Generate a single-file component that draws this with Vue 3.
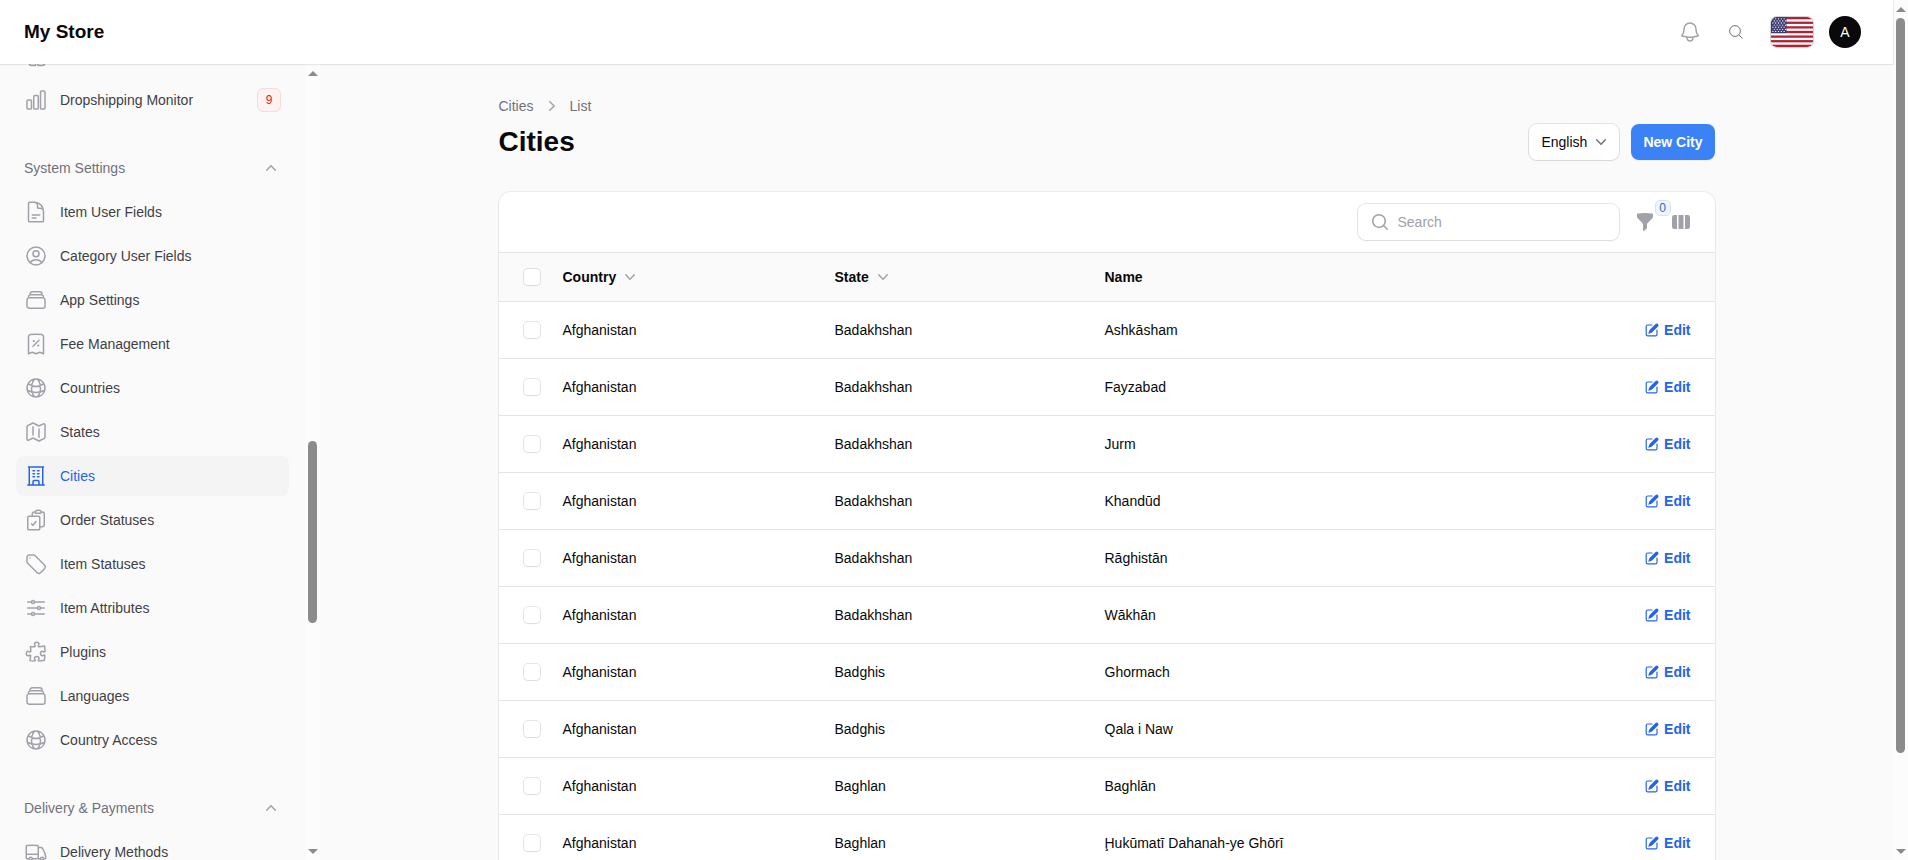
<script setup>
import { ref } from 'vue'

const paths = {
  squares: 'M5.5 17.5v2.25c0 1 .75 1.75 1.75 1.75h4.25v-4M14 17.5v4h4.25c1 0 2.25-.75 2.25-1.75V17.5',
  chart: 'M3 13.125C3 12.504 3.504 12 4.125 12h2.25c.621 0 1.125.504 1.125 1.125v6.75C7.5 20.496 6.996 21 6.375 21h-2.25A1.125 1.125 0 0 1 3 19.875v-6.75ZM9.75 8.625c0-.621.504-1.125 1.125-1.125h2.25c.621 0 1.125.504 1.125 1.125v11.25c0 .621-.504 1.125-1.125 1.125h-2.25a1.125 1.125 0 0 1-1.125-1.125V8.625ZM16.5 4.125c0-.621.504-1.125 1.125-1.125h2.25C20.496 3 21 3.504 21 4.125v15.75c0 .621-.504 1.125-1.125 1.125h-2.25a1.125 1.125 0 0 1-1.125-1.125V4.125Z',
  document: 'M19.5 14.25v-2.625a3.375 3.375 0 0 0-3.375-3.375h-1.5A1.125 1.125 0 0 1 13.5 7.125v-1.5a3.375 3.375 0 0 0-3.375-3.375H8.25m0 12.75h7.5m-7.5 3H12M10.5 2.25H5.625c-.621 0-1.125.504-1.125 1.125v17.25c0 .621.504 1.125 1.125 1.125h12.75c.621 0 1.125-.504 1.125-1.125V11.25a9 9 0 0 0-9-9Z',
  user: 'M17.982 18.725A7.488 7.488 0 0 0 12 15.75a7.488 7.488 0 0 0-5.982 2.975m11.963 0a9 9 0 1 0-11.963 0m11.963 0A8.966 8.966 0 0 1 12 21a8.966 8.966 0 0 1-5.982-2.275M15 9.75a3 3 0 1 1-6 0 3 3 0 0 1 6 0Z',
  stack: 'M6 6.878V6a2.25 2.25 0 0 1 2.25-2.25h7.5A2.25 2.25 0 0 1 18 6v.878m-12 0c.235-.083.487-.128.75-.128h10.5c.263 0 .515.045.75.128m-12 0A2.25 2.25 0 0 0 4.5 9v.878m13.5-3A2.25 2.25 0 0 1 19.5 9v.878m0 0a2.246 2.246 0 0 0-.75-.128H5.25c-.263 0-.515.045-.75.128m15 0A2.25 2.25 0 0 1 21 12v6a2.25 2.25 0 0 1-2.25 2.25H5.25A2.25 2.25 0 0 1 3 18v-6c0-.98.626-1.813 1.5-2.122',
  receipt: 'm9 14.25 6-6m4.5-3.493V21.75l-3.75-1.5-3.75 1.5-3.75-1.5-3.75 1.5V4.757c0-1.108.806-2.057 1.907-2.185a48.507 48.507 0 0 1 11.186 0c1.1.128 1.907 1.077 1.907 2.185ZM9.75 9h.008v.008H9.75V9Zm.375 0a.375.375 0 1 1-.75 0 .375.375 0 0 1 .75 0Zm4.125 4.5h.008v.008h-.008V13.5Zm.375 0a.375.375 0 1 1-.75 0 .375.375 0 0 1 .75 0Z',
  globe: 'M12 21a9.004 9.004 0 0 0 8.716-6.747M12 21a9.004 9.004 0 0 1-8.716-6.747M12 21c2.485 0 4.5-4.03 4.5-9S14.485 3 12 3m0 18c-2.485 0-4.5-4.03-4.5-9S9.515 3 12 3m0 0a8.997 8.997 0 0 1 7.843 4.582M12 3a8.997 8.997 0 0 0-7.843 4.582m15.686 0A11.953 11.953 0 0 1 12 10.5c-2.998 0-5.74-1.1-7.843-2.918m15.686 0A8.959 8.959 0 0 1 21 12c0 .778-.099 1.533-.284 2.253m0 0A17.919 17.919 0 0 1 12 16.5c-3.162 0-6.133-.815-8.716-2.247m0 0A9.015 9.015 0 0 1 3 12c0-1.605.42-3.113 1.157-4.418',
  map: 'M9 6.75V15m6-6v8.25m.503 3.498 4.875-2.437c.381-.19.622-.58.622-1.006V4.82c0-.836-.88-1.38-1.628-1.006l-3.869 1.934c-.317.159-.69.159-1.006 0L9.503 3.252a1.125 1.125 0 0 0-1.006 0L3.622 5.689C3.24 5.88 3 6.27 3 6.695V19.18c0 .836.88 1.38 1.628 1.006l3.869-1.934c.317-.159.69-.159 1.006 0l4.994 2.497c.317.158.69.158 1.006 0Z',
  building: 'M3.75 21h16.5M4.5 3h15M5.25 3v18m13.5-18v18M9 6.75h1.5m-1.5 3h1.5m-1.5 3h1.5m3-6H15m-1.5 3H15m-1.5 3H15M9 21v-3.375c0-.621.504-1.125 1.125-1.125h3.75c.621 0 1.125.504 1.125 1.125V21',
  clipboard: 'M11.35 3.836c-.065.21-.1.433-.1.664 0 .414.336.75.75.75h4.5a.75.75 0 0 0 .75-.75 2.25 2.25 0 0 0-.1-.664m-5.8 0A2.251 2.251 0 0 1 13.5 2.25H15c1.012 0 1.867.668 2.15 1.586m-5.8 0c-.376.023-.75.05-1.124.08C9.095 4.01 8.25 4.973 8.25 6.108V8.25m8.9-4.414c.376.023.75.05 1.124.08 1.131.094 1.976 1.057 1.976 2.192V16.5A2.25 2.25 0 0 1 18 18.75h-2.25m-7.5-10.5H4.875c-.621 0-1.125.504-1.125 1.125v11.25c0 .621.504 1.125 1.125 1.125h9.75c.621 0 1.125-.504 1.125-1.125V18.75m-7.5-10.5h6.375c.621 0 1.125.504 1.125 1.125v9.375m-8.25-3 1.5 1.5 3-3.75',
  tag: 'M9.568 3H5.25A2.25 2.25 0 0 0 3 5.25v4.318c0 .597.237 1.17.659 1.591l9.581 9.581c.699.699 1.78.872 2.607.33a18.095 18.095 0 0 0 5.223-5.223c.542-.827.369-1.908-.33-2.607L11.16 3.66A2.25 2.25 0 0 0 9.568 3ZM6 6h.008v.008H6V6Z',
  sliders: 'M10.5 6h9.75M10.5 6a1.5 1.5 0 1 1-3 0m3 0a1.5 1.5 0 1 0-3 0M3.75 6H7.5m3 12h9.75m-9.75 0a1.5 1.5 0 0 1-3 0m3 0a1.5 1.5 0 0 0-3 0m-3.75 0H7.5m9-6h3.75m-3.75 0a1.5 1.5 0 0 1-3 0m3 0a1.5 1.5 0 0 0-3 0m-9.75 0h9.75',
  puzzle: 'M14.25 6.087c0-.355.186-.676.401-.959.221-.29.349-.634.349-1.003 0-1.036-1.007-1.875-2.25-1.875s-2.25.84-2.25 1.875c0 .369.128.713.349 1.003.215.283.401.604.401.959v0a.64.64 0 0 1-.657.643 48.39 48.39 0 0 1-4.163-.3c.186 1.613.293 3.25.315 4.907a.656.656 0 0 1-.658.663v0c-.355 0-.676-.186-.959-.401a1.647 1.647 0 0 0-1.003-.349c-1.036 0-1.875 1.007-1.875 2.25s.84 2.25 1.875 2.25c.369 0 .713-.128 1.003-.349.283-.215.604-.401.959-.401v0c.31 0 .555.26.532.57a48.039 48.039 0 0 1-.642 5.056c1.518.19 3.058.309 4.616.354a.64.64 0 0 0 .657-.643v0c0-.355-.186-.676-.401-.959a1.647 1.647 0 0 1-.349-1.003c0-1.035 1.008-1.875 2.25-1.875 1.243 0 2.25.84 2.25 1.875 0 .369-.128.713-.349 1.003-.215.283-.4.604-.4.959v0c0 .333.277.599.61.58a48.1 48.1 0 0 0 5.427-.63 48.05 48.05 0 0 0 .582-4.717.532.532 0 0 0-.533-.57v0c-.355 0-.676.186-.959.401-.29.221-.634.349-1.003.349-1.035 0-1.875-1.007-1.875-2.25s.84-2.25 1.875-2.25c.37 0 .713.128 1.003.349.283.215.604.401.96.401v0a.656.656 0 0 0 .658-.663 48.422 48.422 0 0 0-.37-5.36c-1.886.342-3.81.574-5.766.689a.578.578 0 0 1-.61-.58v0Z',
  truck: 'M8.25 18.75a1.5 1.5 0 0 1-3 0m3 0a1.5 1.5 0 0 0-3 0m3 0h6m-9 0H3.375a1.125 1.125 0 0 1-1.125-1.125V14.25m17.25 4.5a1.5 1.5 0 0 1-3 0m3 0a1.5 1.5 0 0 0-3 0m3 0h1.125c.621 0 1.129-.504 1.09-1.124a17.902 17.902 0 0 0-3.213-9.193 2.056 2.056 0 0 0-1.58-.86H14.25M16.5 18.75h-2.25m0-11.177v-.958c0-.568-.422-1.048-.987-1.106a48.554 48.554 0 0 0-10.026 0 1.106 1.106 0 0 0-.987 1.106v7.635m12-6.677v6.677m0 4.5v-4.5m0 0h-12',
  bell: 'M14.857 17.082a23.848 23.848 0 0 0 5.454-1.31A8.967 8.967 0 0 1 18 9.75V9A6 6 0 0 0 6 9v.75a8.967 8.967 0 0 1-2.312 6.022c1.733.64 3.56 1.085 5.455 1.31m5.714 0a24.255 24.255 0 0 1-5.714 0m5.714 0a3 3 0 1 1-5.714 0',
}

const solid = {
  up: 'M14.77 12.79a.75.75 0 0 1-1.06-.02L10 8.832 6.29 12.77a.75.75 0 1 1-1.08-1.04l4.25-4.5a.75.75 0 0 1 1.08 0l4.25 4.5a.75.75 0 0 1-.02 1.06Z',
  down: 'M5.23 7.21a.75.75 0 0 1 1.06.02L10 11.168l3.71-3.938a.75.75 0 1 1 1.08 1.04l-4.25 4.5a.75.75 0 0 1-1.08 0l-4.25-4.5a.75.75 0 0 1 .02-1.06Z',
  right: 'M7.21 14.77a.75.75 0 0 1 .02-1.06L11.168 10 7.23 6.29a.75.75 0 1 1 1.04-1.08l4.5 4.25a.75.75 0 0 1 0 1.08l-4.5 4.25a.75.75 0 0 1-1.06-.02Z',
  search: 'M9 3.5a5.5 5.5 0 1 0 0 11 5.5 5.5 0 0 0 0-11ZM2 9a7 7 0 1 1 12.452 4.391l3.328 3.329a.75.75 0 1 1-1.06 1.06l-3.329-3.328A7 7 0 0 1 2 9Z',
  funnel: 'M2.628 1.601C5.028 1.206 7.49 1 10 1s4.973.206 7.372.601a.75.75 0 0 1 .628.74v2.288a2.25 2.25 0 0 1-.659 1.59l-4.682 4.683a2.25 2.25 0 0 0-.659 1.59v3.037c0 .684-.31 1.33-.844 1.757l-1.937 1.55A.75.75 0 0 1 8 18.25v-5.757a2.25 2.25 0 0 0-.659-1.591L2.659 6.22A2.25 2.25 0 0 1 2 4.629V2.34a.75.75 0 0 1 .628-.74Z',
  columns: 'M14 17h2.75A2.25 2.25 0 0 0 19 14.75v-9.5A2.25 2.25 0 0 0 16.75 3H14v14ZM12.5 3h-5v14h5V3ZM3.25 3H6v14H3.25A2.25 2.25 0 0 1 1 14.75v-9.5A2.25 2.25 0 0 1 3.25 3Z',
  pencil: 'm5.433 13.917 1.262-3.155A4 4 0 0 1 7.58 9.42l6.92-6.918a2.121 2.121 0 0 1 3 3l-6.92 6.918c-.383.383-.84.685-1.343.886l-3.154 1.262a.5.5 0 0 1-.65-.65ZM3.5 5.75c0-.69.56-1.25 1.25-1.25H10A.75.75 0 0 0 10 3H4.75A2.75 2.75 0 0 0 2 5.75v9.5A2.75 2.75 0 0 0 4.75 18h9.5A2.75 2.75 0 0 0 17 15.25V10a.75.75 0 0 0-1.5 0v5.25c0 .69-.56 1.25-1.25 1.25h-9.5c-.69 0-1.25-.56-1.25-1.25v-9.5Z',
}

const groups = [
  {
    items: [
      { label: '', icon: 'squares' },
      { label: 'Dropshipping Monitor', icon: 'chart', badge: 9 },
    ],
  },
  {
    title: 'System Settings',
    items: [
      { label: 'Item User Fields', icon: 'document' },
      { label: 'Category User Fields', icon: 'user' },
      { label: 'App Settings', icon: 'stack' },
      { label: 'Fee Management', icon: 'receipt' },
      { label: 'Countries', icon: 'globe' },
      { label: 'States', icon: 'map' },
      { label: 'Cities', icon: 'building', active: true },
      { label: 'Order Statuses', icon: 'clipboard' },
      { label: 'Item Statuses', icon: 'tag' },
      { label: 'Item Attributes', icon: 'sliders' },
      { label: 'Plugins', icon: 'puzzle' },
      { label: 'Languages', icon: 'stack' },
      { label: 'Country Access', icon: 'globe' },
    ],
  },
  {
    title: 'Delivery & Payments',
    items: [{ label: 'Delivery Methods', icon: 'truck' }],
  },
]

const cities = [
  ['Badakhshan', 'Ashkāsham'],
  ['Badakhshan', 'Fayzabad'],
  ['Badakhshan', 'Jurm'],
  ['Badakhshan', 'Khandūd'],
  ['Badakhshan', 'Rāghistān'],
  ['Badakhshan', 'Wākhān'],
  ['Badghis', 'Ghormach'],
  ['Badghis', 'Qala i Naw'],
  ['Baghlan', 'Baghlān'],
  ['Baghlan', 'Ḩukūmatī Dahanah-ye Ghōrī'],
].map(([state, name]) => ({ country: 'Afghanistan', state, name }))

const query = ref('')
const language = ref('English')
</script>

<template>
  <div class="page">
    <div class="shell">
      <header class="topbar">
        <a class="brand" href="#">My Store</a>
        <div class="tools">
          <button class="tool" type="button" aria-label="Notifications">
            <svg class="line i24" viewBox="0 0 24 24"><path :d="paths.bell" /></svg>
          </button>
          <button class="tool" type="button" aria-label="Search">
            <svg class="thin" viewBox="0 0 14 14"><circle cx="6" cy="6" r="5.4" /><path d="M9.8 9.8l3.8 3.8" /></svg>
          </button>
          <button class="flag" type="button" aria-label="Change language">
            <svg viewBox="0 0 42 30" preserveAspectRatio="none">
              <rect width="42" height="30" fill="#fff" />
              <rect v-for="n in 7" :key="n" width="42" :y="(n - 1) * 4.615" height="2.308" fill="#b22234" />
              <rect width="15.5" height="16.15" fill="#3c3b6e" />
              <template v-for="r in 7" :key="r">
                <circle v-for="c in 5" :key="c" :cx="(r % 2 ? 0 : 1.4) + c * 2.8 - 0.9" :cy="r * 2.1 - 0.3" r=".65" fill="#fff" />
              </template>
            </svg>
          </button>
          <button class="avatar" type="button" aria-label="Account">A</button>
        </div>
      </header>

      <div class="body">
        <aside class="sidebar">
          <nav class="nav" aria-label="Main">
            <section v-for="(g, gi) in groups" :key="gi" class="group">
              <button v-if="g.title" class="group-title" type="button" aria-expanded="true">
                <span>{{ g.title }}</span>
                <svg class="fill i20" viewBox="0 0 20 20"><path :d="solid.up" /></svg>
              </button>
              <a v-for="(item, ii) in g.items" :key="ii" href="#" class="item" :class="{ active: item.active }">
                <svg class="line i24" viewBox="0 0 24 24"><path :d="paths[item.icon]" /></svg>
                <span class="item-label">{{ item.label }}</span>
                <span v-if="item.badge" class="badge">{{ item.badge }}</span>
              </a>
            </section>
          </nav>
          <div class="scrollbar" aria-hidden="true">
            <i class="arrow up"></i>
            <div class="track side-track"><b class="thumb"></b></div>
            <i class="arrow down"></i>
          </div>
        </aside>

        <main class="main">
          <div class="content">
            <div class="heading">
              <div>
                <nav class="crumbs" aria-label="Breadcrumb">
                  <a href="#">Cities</a>
                  <svg class="fill i20" viewBox="0 0 20 20"><path :d="solid.right" /></svg>
                  <a href="#">List</a>
                </nav>
                <h1>Cities</h1>
              </div>
              <div class="actions">
                <div class="lang">
                  <select v-model="language" aria-label="Language">
                    <option>English</option>
                  </select>
                  <svg class="fill i20" viewBox="0 0 20 20"><path :d="solid.down" /></svg>
                </div>
                <button class="primary" type="button">New City</button>
              </div>
            </div>

            <section class="card">
              <div class="toolbar">
                <label class="search">
                  <svg class="fill i20" viewBox="0 0 20 20"><path :d="solid.search" /></svg>
                  <input v-model="query" type="search" placeholder="Search" aria-label="Search" />
                </label>
                <button class="icon-btn" type="button" aria-label="Filter">
                  <svg class="fill i20" viewBox="0 0 20 20"><path :d="solid.funnel" /></svg>
                  <span class="count">0</span>
                </button>
                <button class="icon-btn" type="button" aria-label="Toggle columns">
                  <svg class="fill i20" viewBox="0 0 20 20"><path :d="solid.columns" /></svg>
                </button>
              </div>
              <table>
                <colgroup>
                  <col class="c-check" />
                  <col class="c-country" />
                  <col class="c-state" />
                  <col />
                  <col class="c-edit" />
                </colgroup>
                <thead>
                  <tr>
                    <th class="check"><input type="checkbox" aria-label="Select all" /></th>
                    <th>
                      <button class="sort" type="button">Country<svg class="fill i20" viewBox="0 0 20 20"><path :d="solid.down" /></svg></button>
                    </th>
                    <th>
                      <button class="sort" type="button">State<svg class="fill i20" viewBox="0 0 20 20"><path :d="solid.down" /></svg></button>
                    </th>
                    <th>Name</th>
                    <th></th>
                  </tr>
                </thead>
                <tbody>
                  <tr v-for="c in cities" :key="c.name">
                    <td class="check"><input type="checkbox" :aria-label="'Select ' + c.name" /></td>
                    <td>{{ c.country }}</td>
                    <td>{{ c.state }}</td>
                    <td>{{ c.name }}</td>
                    <td class="edit-cell">
                      <a class="edit" href="#"><svg class="i16" viewBox="0 0 20 20"><path :d="solid.pencil" /></svg>Edit</a>
                    </td>
                  </tr>
                </tbody>
              </table>
            </section>
          </div>
        </main>
      </div>
    </div>
    <div class="scrollbar" aria-hidden="true">
      <i class="arrow up"></i>
      <div class="track page-track"><b class="thumb"></b></div>
      <i class="arrow down"></i>
    </div>
  </div>
</template>

<style>
body { margin: 0; background: #fafafa; }
</style>

<style scoped>
* { box-sizing: border-box; }
.page { display: flex; height: 100vh; overflow: hidden; font-family: "Liberation Sans", Arial, sans-serif; font-size: 14px; line-height: 20px; color: #09090b; background: #fafafa; }
a { color: inherit; text-decoration: none; }
button { font: inherit; color: inherit; background: none; border: 0; padding: 0; cursor: pointer; }
svg { display: block; flex: none; }
.i16 { width: 16px; height: 16px; fill: currentColor; }
.i20 { width: 20px; height: 20px; }
.i24 { width: 24px; height: 24px; }
.fill { fill: #a1a1aa; }
.line { fill: none; stroke: #a1a1aa; stroke-width: 1.5; stroke-linecap: round; stroke-linejoin: round; }
.thin { width: 14px; height: 14px; fill: none; stroke: #71717a; stroke-width: 1; }

.shell { flex: 1; min-width: 0; display: flex; flex-direction: column; }
.topbar { flex: none; height: 64px; padding: 0 32px 0 24px; display: flex; align-items: center; justify-content: space-between; background: #fff; box-shadow: 0 0 0 1px rgba(9, 9, 11, .05), 0 1px 2px rgba(0, 0, 0, .05); z-index: 1; }
.brand { font-size: 19px; line-height: 28px; font-weight: 700; }
.tools { display: flex; align-items: center; }
.tool { width: 46px; height: 36px; display: flex; align-items: center; justify-content: center; }
.flag { width: 42px; height: 30px; margin: 0 16px 0 12px; border-radius: 6px; overflow: hidden; box-shadow: 0 0 0 1px #d4d4d8; }
.flag svg { width: 100%; height: 100%; }
.avatar { width: 32px; height: 32px; border-radius: 50%; background: #09090b; color: #fff; text-align: center; }

.body { flex: 1; min-height: 0; display: flex; }
.sidebar { flex: none; width: 320px; display: flex; overflow: hidden; }
.nav { flex: 1; margin-top: -28px; padding: 0 16px; display: flex; flex-direction: column; gap: 28px; }
.group { display: flex; flex-direction: column; gap: 4px; }
.group-title { display: flex; align-items: center; justify-content: space-between; height: 40px; padding: 0 8px; color: #71717a; }
.item { display: flex; align-items: center; gap: 12px; height: 40px; padding: 0 8px; border-radius: 8px; color: #3f3f46; }
.item-label { flex: 1; }
.item.active { background: #f4f4f5; color: #2563eb; }
.item.active .line { stroke: #2563eb; }
.badge { width: 24px; height: 24px; line-height: 22px; text-align: center; font-size: 12px; border: 1px solid #fbdada; border-radius: 6px; background: #fef2f2; color: #dc2626; }

.scrollbar { flex: none; width: 15px; display: flex; flex-direction: column; align-items: center; background: #fcfcfc; }
.arrow { height: 18px; display: flex; align-items: center; }
.arrow::before { content: ""; border: 5px solid transparent; }
.arrow.up::before { border-top: 0; border-bottom-color: #8b8b8b; }
.arrow.down::before { border-bottom: 0; border-top-color: #8b8b8b; }
.track { flex: 1; display: flex; flex-direction: column; }
.track::before, .track::after { content: ""; }
.thumb { width: 9px; border-radius: 5px; background: #8b8b8b; }
.side-track::before { flex: 359; }
.side-track .thumb { flex: 182; }
.side-track::after { flex: 219; }
.page-track .thumb { flex: 735; }
.page-track::after { flex: 89; }

.main { flex: 1; min-width: 0; overflow: hidden; }
.content { max-width: 1280px; margin: 0 auto; padding: 32px; }
.heading { display: flex; align-items: flex-end; justify-content: space-between; margin-bottom: 32px; }
.crumbs { display: flex; align-items: center; gap: 8px; margin-bottom: 8px; color: #71717a; }
h1 { margin: 0; font-size: 28px; line-height: 36px; font-weight: 700; }
.actions { display: flex; align-items: center; gap: 12px; }
.lang { position: relative; width: 90px; border-radius: 8px; background: #fff; box-shadow: 0 0 0 1px rgba(9, 9, 11, .1), 0 1px 2px rgba(0, 0, 0, .05); }
.lang select { appearance: none; width: 100%; height: 36px; padding: 0 32px 0 12px; border: 0; border-radius: 8px; background: none; font: inherit; color: inherit; }
.lang svg { position: absolute; right: 8px; top: 8px; fill: #6b7280; pointer-events: none; }
.primary { height: 36px; padding: 0 12px; border-radius: 8px; background: #3b82f6; color: #fff; font-weight: 700; box-shadow: 0 1px 2px rgba(0, 0, 0, .05); }

.card { border-radius: 12px; background: #fff; box-shadow: 0 0 0 1px rgba(9, 9, 11, .06), 0 1px 2px rgba(0, 0, 0, .05); overflow: hidden; }
.toolbar { display: flex; align-items: center; justify-content: flex-end; gap: 16px; padding: 12px 24px; }
.search { display: flex; align-items: center; gap: 8px; width: 261px; height: 36px; padding: 0 12px; border-radius: 8px; box-shadow: 0 0 0 1px rgba(9, 9, 11, .1), 0 1px 2px rgba(0, 0, 0, .05); }
.search input { flex: 1; min-width: 0; padding: 0; border: 0; outline: 0; background: none; font: inherit; color: inherit; }
.search input::placeholder { color: #a1a1aa; opacity: 1; }
.icon-btn { position: relative; }
.count { position: absolute; left: 20px; top: -12px; width: 16px; height: 16px; line-height: 14px; text-align: center; font-size: 12px; border: 1px solid #d3e3fd; border-radius: 5px; background: #eff6ff; color: #2563eb; }

table { width: 100%; table-layout: fixed; border-collapse: separate; border-spacing: 0; }
.c-check { width: 52px; }
.c-country { width: 272px; }
.c-state { width: 270px; }
.c-edit { width: 120px; }
th, td { padding: 0 12px; text-align: left; vertical-align: middle; border-top: 1px solid #e4e4e7; }
th { height: 49px; background: #fafafa; font-weight: 700; }
td { height: 57px; }
.check { padding: 0 0 0 25px; }
.check input { display: block; appearance: none; width: 16px; height: 16px; margin: 0; border-radius: 4px; background: #fff; box-shadow: 0 0 0 1px rgba(9, 9, 11, .1), 0 1px 2px rgba(0, 0, 0, .05); }
.sort { display: flex; align-items: center; gap: 4px; font-weight: 700; }
.edit-cell { padding-right: 24px; }
.edit { display: flex; align-items: center; justify-content: flex-end; gap: 4px; font-weight: 700; color: #2563eb; }
</style>
